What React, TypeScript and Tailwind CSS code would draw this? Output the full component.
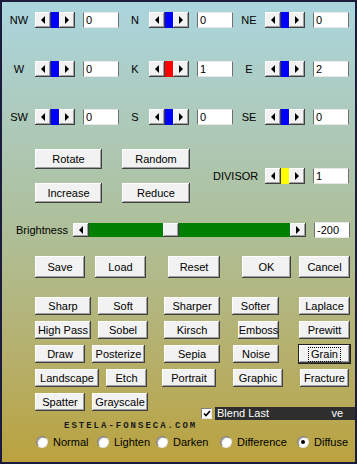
import React from "react";

const face =
  "bg-[#f2f2f2] shadow-[inset_-1px_-1px_0_#404040,inset_1px_1px_0_#ffffff,inset_-2px_-2px_0_#a0a0a0]";

const LeftArrow = () => (
  <div className="h-0 w-0 border-y-[4px] border-r-[4px] border-y-transparent border-r-black" />
);
const RightArrow = () => (
  <div className="h-0 w-0 border-y-[4px] border-l-[4px] border-y-transparent border-l-black" />
);

const Spinner = ({ thumb }: { thumb: string }) => (
  <div className="flex h-4 w-10 shrink-0">
    <div className={`${face} flex w-4 items-center justify-center`}>
      <LeftArrow />
    </div>
    <div className={`w-2 ${thumb}`} />
    <div className={`${face} flex w-4 items-center justify-center`}>
      <RightArrow />
    </div>
  </div>
);

const Edit = ({ value, className = "" }: { value: string; className?: string }) => (
  <div
    className={`h-4 w-9 shrink-0 border-x border-[#707070] border-y border-y-[#e8e8e8] bg-white pl-[2px] text-[11px] leading-[14px] ${className}`}
  >
    {value}
  </div>
);

const Btn = ({
  label,
  className = "",
  focused = false,
}: {
  label: string;
  className?: string;
  focused?: boolean;
}) => (
  <div
    className={`${face} flex shrink-0 items-center justify-center text-[11px] leading-none text-black ${
      focused ? "outline outline-1 outline-[#202020]" : ""
    } ${className}`}
  >
    {focused ? (
      <span className="border border-dotted border-black px-[2px] py-[1px]">{label}</span>
    ) : (
      label
    )}
  </div>
);

const Radio = ({ label, checked = false, className = "" }: { label: string; checked?: boolean; className?: string }) => (
  <div className={`flex shrink-0 items-center ${className}`}>
    <div className="flex h-3 w-3 items-center justify-center rounded-full border border-[#808080] border-b-[#e6e6e6] border-r-[#e6e6e6] bg-white shadow-[inset_1px_1px_0_#a0a0a0]">
      {checked && <div className="h-1 w-1 rounded-full bg-black" />}
    </div>
    <span className="ml-[5px] text-[11px] leading-none">{label}</span>
  </div>
);

const spinRows = [
  [
    { label: "NW", value: "0", thumb: "bg-[#0000ff]" },
    { label: "N", value: "0", thumb: "bg-[#0000ff]" },
    { label: "NE", value: "0", thumb: "bg-[#0000ff]" },
  ],
  [
    { label: "W", value: "0", thumb: "bg-[#0000ff]" },
    { label: "K", value: "1", thumb: "bg-[#ff0000]" },
    { label: "E", value: "2", thumb: "bg-[#0000ff]" },
  ],
  [
    { label: "SW", value: "0", thumb: "bg-[#0000ff]" },
    { label: "S", value: "0", thumb: "bg-[#0000ff]" },
    { label: "SE", value: "0", thumb: "bg-[#0000ff]" },
  ],
];
const labelMl = ["ml-[6px]", "ml-[5px]", "ml-[5px]"];
const spinMl = ["ml-[5px]", "ml-[3px]", "ml-[5px]"];
const rowMt = ["mt-[10px]", "mt-[33px]", "mt-[32px]"];

export default function App() {
  return (
    <div className="h-[464px] w-[357px] overflow-hidden border-2 border-[#1b1b3d] bg-linear-to-b from-[#abd5de] via-[#aebf98] to-[#baa23c] font-['Liberation_Sans',Arial,sans-serif] text-black">
      {spinRows.map((row, r) => (
        <div key={r} className={`flex h-4 items-center ${rowMt[r]}`}>
          {row.map((c, i) => (
            <React.Fragment key={c.label}>
              <div className={`w-[22px] shrink-0 text-center text-[11px] leading-none ${labelMl[i]}`}>{c.label}</div>
              <div className={spinMl[i]}>
                <Spinner thumb={c.thumb} />
              </div>
              <Edit value={c.value} className="ml-[8px]" />
            </React.Fragment>
          ))}
        </div>
      ))}

      <div className="mt-[24px] flex items-center">
        <div className="ml-[33px] grid grid-cols-[67px_68px] gap-x-[20px] gap-y-[14px]">
          <Btn label="Rotate" className="h-5" />
          <Btn label="Random" className="h-5" />
          <Btn label="Increase" className="h-5" />
          <Btn label="Reduce" className="h-5" />
        </div>
        <div className="ml-[23px] w-[52px] shrink-0 text-[11px] leading-none">DIVISOR</div>
        <Spinner thumb="bg-[#ffff00]" />
        <Edit value="1" className="ml-[8px]" />
      </div>

      <div className="mt-[19px] flex h-4 items-center">
        <div className="ml-[14px] w-[57px] shrink-0 text-[11px] leading-none">Brightness</div>
        <div className="flex h-[14px] w-[233px] shrink-0">
          <div className={`${face} flex w-4 items-center justify-center`}>
            <LeftArrow />
          </div>
          <div className="w-[74px] bg-[#008000]" />
          <div className={`${face} w-4`} />
          <div className="flex-1 bg-[#008000]" />
          <div className={`${face} flex w-4 items-center justify-center`}>
            <RightArrow />
          </div>
        </div>
        <Edit value="-200" className="ml-[8px]" />
      </div>

      <div className="mt-[18px] flex h-[22px]">
        <Btn label="Save" className="ml-[33px] w-[50px]" />
        <Btn label="Load" className="ml-[10px] w-[51px]" />
        <Btn label="Reset" className="ml-[22px] w-[52px]" />
        <Btn label="OK" className="ml-[22px] w-[49px]" />
        <Btn label="Cancel" className="ml-[8px] w-[51px]" />
      </div>

      <div className="mt-[19px] flex flex-col gap-[6px]">
        <div className="flex h-[18px]">
          <Btn label="Sharp" className="ml-[33px] w-[56px]" />
          <Btn label="Soft" className="ml-[7px] w-[50px]" />
          <Btn label="Sharper" className="ml-[16px] w-[56px]" />
          <Btn label="Softer" className="ml-[12px] w-[47px]" />
          <Btn label="Laplace" className="ml-[20px] w-[51px]" />
        </div>
        <div className="flex h-[18px]">
          <Btn label="High Pass" className="ml-[33px] w-[56px]" />
          <Btn label="Sobel" className="ml-[7px] w-[50px]" />
          <Btn label="Kirsch" className="ml-[16px] w-[56px]" />
          <Btn label="Emboss" className="ml-[18px] w-[41px]" />
          <Btn label="Prewitt" className="ml-[20px] w-[51px]" />
        </div>
        <div className="flex h-[18px]">
          <Btn label="Draw" className="ml-[33px] w-[50px]" />
          <Btn label="Posterize" className="ml-[7px] w-[53px]" />
          <Btn label="Sepia" className="ml-[19px] w-[56px]" />
          <Btn label="Noise" className="ml-[13px] w-[46px]" />
          <Btn label="Grain" focused className="ml-[20px] w-[51px]" />
        </div>
        <div className="flex h-[18px]">
          <Btn label="Landscape" className="ml-[33px] w-[64px]" />
          <Btn label="Etch" className="ml-[7px] w-[41px]" />
          <Btn label="Portrait" className="ml-[15px] w-[54px]" />
          <Btn label="Graphic" className="ml-[17px] w-[50px]" />
          <Btn label="Fracture" className="ml-[17px] w-[49px]" />
        </div>
        <div className="flex h-[18px] items-start">
          <Btn label="Spatter" className="ml-[33px] h-[18px] w-[50px]" />
          <Btn label="Grayscale" className="ml-[7px] h-[18px] w-[56px]" />
          <div className="ml-[53px] mt-[14px] flex h-[13px] flex-1 items-center">
            <div className="flex h-[11px] w-[11px] shrink-0 items-center justify-center border border-[#808080] border-b-[#e6e6e6] border-r-[#e6e6e6] bg-white">
              <svg width="8" height="7" viewBox="0 0 8 7">
                <path d="M1 3.5 L3 5.5 L7 1" stroke="black" strokeWidth="1.6" fill="none" />
              </svg>
            </div>
            <div className="ml-[3px] flex h-[13px] flex-1 items-center justify-between bg-[#2e2e2e] pl-[2px] pr-[12px] text-[11px] leading-none text-white">
              <span>Blend Last</span>
              <span>ve</span>
            </div>
          </div>
        </div>
      </div>

      <div className="ml-[62px] mt-[11px] h-[9px] font-['Liberation_Mono',monospace] text-[9px] font-bold leading-[9px] tracking-[2px] text-[#1a1a1a]">
        ESTELA-FONSECA.COM
      </div>

      <div className="mt-[5px] flex h-3 items-center">
        <Radio label="Normal" className="ml-[34px] w-[61px]" />
        <Radio label="Lighten" className="w-[59px]" />
        <Radio label="Darken" className="w-[64px]" />
        <Radio label="Difference" className="w-[77px]" />
        <Radio label="Diffuse" checked />
      </div>
    </div>
  );
}
